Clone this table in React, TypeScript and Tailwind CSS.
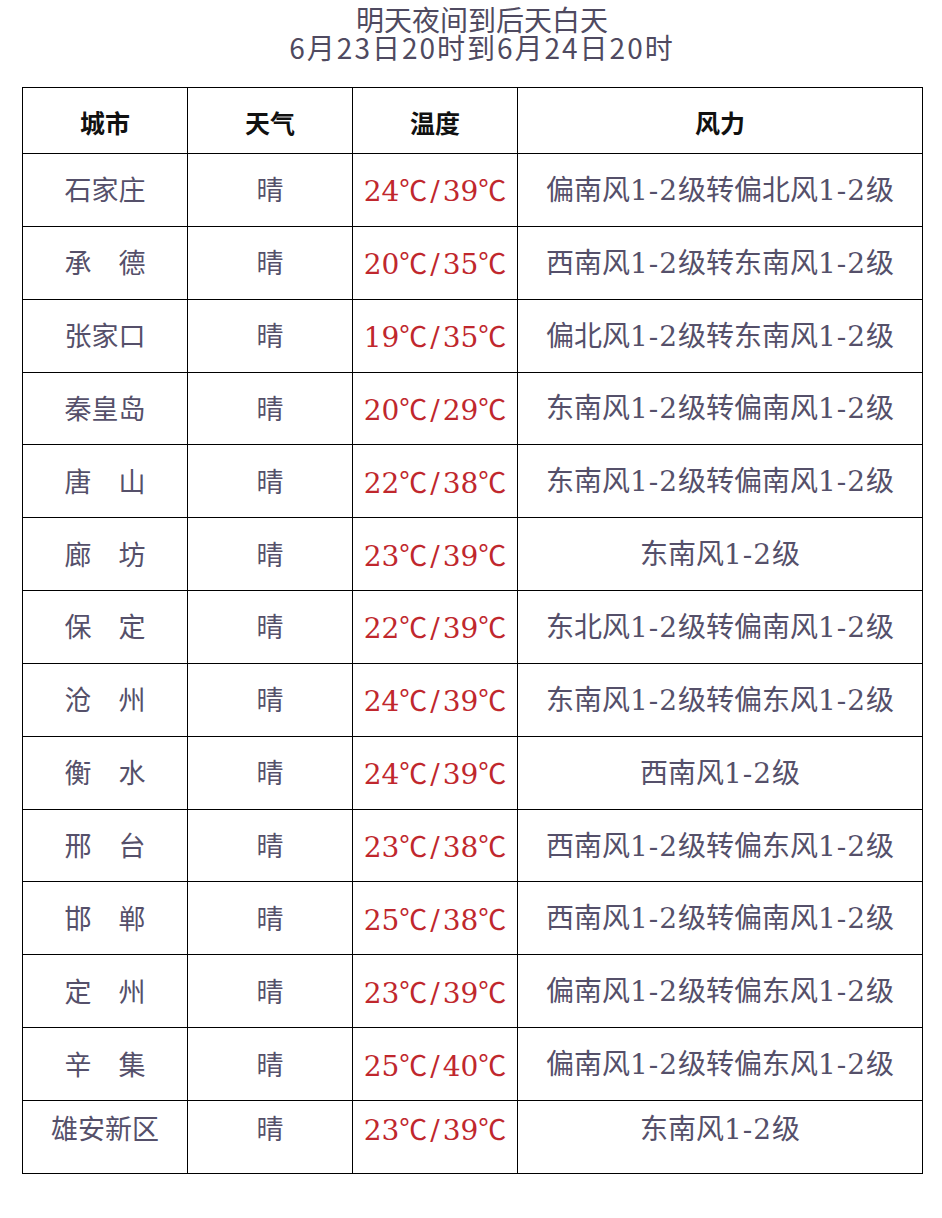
const rows = [
  { city: "石家庄", temp: ["24", "39"], wind: "偏南风1-2级转偏北风1-2级" },
  { city: "承　德", temp: ["20", "35"], wind: "西南风1-2级转东南风1-2级" },
  { city: "张家口", temp: ["19", "35"], wind: "偏北风1-2级转东南风1-2级" },
  { city: "秦皇岛", temp: ["20", "29"], wind: "东南风1-2级转偏南风1-2级" },
  { city: "唐　山", temp: ["22", "38"], wind: "东南风1-2级转偏南风1-2级" },
  { city: "廊　坊", temp: ["23", "39"], wind: "东南风1-2级" },
  { city: "保　定", temp: ["22", "39"], wind: "东北风1-2级转偏南风1-2级" },
  { city: "沧　州", temp: ["24", "39"], wind: "东南风1-2级转偏东风1-2级" },
  { city: "衡　水", temp: ["24", "39"], wind: "西南风1-2级" },
  { city: "邢　台", temp: ["23", "38"], wind: "西南风1-2级转偏东风1-2级" },
  { city: "邯　郸", temp: ["25", "38"], wind: "西南风1-2级转偏南风1-2级" },
  { city: "定　州", temp: ["23", "39"], wind: "偏南风1-2级转偏东风1-2级" },
  { city: "辛　集", temp: ["25", "40"], wind: "偏南风1-2级转偏东风1-2级" },
  { city: "雄安新区", temp: ["23", "39"], wind: "东南风1-2级" },
];

// split "1-2" runs out so the digits can get a little extra spacing
function Wind({ text }: { text: string }) {
  const parts = text.split(/(1-2)/);
  return (
    <>
      {parts.map((p, i) =>
        p === "1-2" ? (
          <span key={i} className="tracking-[1px]">
            {p}
          </span>
        ) : (
          <span key={i}>{p}</span>
        )
      )}
    </>
  );
}

function Deg() {
  return <span className="font-['Noto_Sans_CJK_SC',sans-serif]">℃</span>;
}

export default function App() {
  return (
    <div className="w-[942px] h-[1218px] bg-white font-['DejaVu_Serif','Noto_Sans_CJK_SC',serif]">
      {/* title */}
      <div className="pt-[5px] pl-[22px] text-center text-[#4f4a60] font-['Noto_Sans_CJK_SC',sans-serif] text-[28px] leading-[28px]">
        <div>明天夜间到后天白天</div>
        <div className="tracking-[2px]">6月23日20时到6月24日20时</div>
      </div>
      {/* table */}
      <table className="ml-[22px] mt-[26px] w-[901px] border-collapse table-fixed">
        <colgroup>
          <col className="w-[165px]" />
          <col className="w-[165px]" />
          <col className="w-[165px]" />
          <col />
        </colgroup>
        <thead>
          <tr className="h-[66px]">
            {["城市", "天气", "温度", "风力"].map((h) => (
              <th
                key={h}
                className="border-[1.5px] border-black pt-[4px] text-[25px] font-semibold text-[#111] font-['Noto_Sans_CJK_SC',sans-serif]"
              >
                {h}
              </th>
            ))}
          </tr>
        </thead>
        <tbody>
          {rows.map((r, i) => {
            const last = i === rows.length - 1;
            return (
              <tr key={r.city} className="h-[72.85px] text-[28px] text-[#55506a]">
                <td className={`border-[1.5px] border-black text-center ${last ? "pb-[14px]" : "pt-[2px]"}`}>
                  <span className="font-['Noto_Sans_CJK_SC',sans-serif] text-[27px]">{r.city}</span>
                </td>
                <td className={`border-[1.5px] border-black text-center ${last ? "pb-[14px]" : "pt-[2px]"}`}>
                  <span className="font-['Noto_Sans_CJK_SC',sans-serif] text-[27px]">晴</span>
                </td>
                <td className={`border-[1.5px] border-black text-center text-[#c0272d] ${last ? "pb-[14px]" : "pt-[2px]"}`}>
                  {r.temp[0]}
                  <Deg />
                  <span className="mx-[3px]">/</span>
                  {r.temp[1]}
                  <Deg />
                </td>
                <td className={`border-[1.5px] border-black text-center ${last ? "pb-[14px]" : "pt-[2px]"}`}>
                  <Wind text={r.wind} />
                </td>
              </tr>
            );
          })}
        </tbody>
      </table>
    </div>
  );
}
